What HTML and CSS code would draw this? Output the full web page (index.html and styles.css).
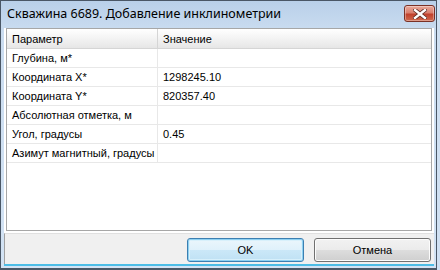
FILE: index.html
```html
<!DOCTYPE html>
<html lang="ru">
<head>
  <meta charset="UTF-8">
  <title>Добавление инклинометрии</title>
  <link rel="stylesheet" href="styles.css">
</head>
<body>
  <div class="window">
    <div class="titlebar">
      <span class="title">Скважина 6689. Добавление инклинометрии</span>
      <button class="close" title="Закрыть">
        <svg width="14" height="10" viewBox="0 0 14 10">
          <path d="M2 1 L12 9 M12 1 L2 9" stroke="#5a2a22" stroke-width="4" stroke-linecap="square"/>
          <path d="M2 1 L12 9 M12 1 L2 9" stroke="#fff" stroke-width="2.4" stroke-linecap="square"/>
        </svg>
      </button>
    </div>

    <div class="client">
      <div class="grid-wrap">
        <table class="grid">
          <thead>
            <tr><th class="col-name">Параметр</th><th>Значение</th></tr>
          </thead>
          <tbody>
            <tr><td>Глубина, м*</td><td></td></tr>
            <tr><td>Координата X*</td><td>1298245.10</td></tr>
            <tr><td>Координата Y*</td><td>820357.40</td></tr>
            <tr><td>Абсолютная отметка, м</td><td></td></tr>
            <tr><td>Угол, градусы</td><td>0.45</td></tr>
            <tr><td>Азимут магнитный, градусы</td><td></td></tr>
          </tbody>
        </table>
      </div>

      <div class="footer">
        <button class="btn default">OK</button>
        <button class="btn">Отмена</button>
      </div>
    </div>
  </div>
</body>
</html>
```

FILE: styles.css
```css
body { margin: 0; background: #cfe0f2; font-family: "Liberation Sans", Arial, sans-serif; }
.window { width: 437px; height: 270px; box-sizing: border-box; border: 1px solid #4a5766; border-bottom-width: 2px; display: flex; flex-direction: column; background: linear-gradient(#b9d0e9, #cadcf0 30px, #d3e3f4); }
.titlebar { height: 27px; display: flex; align-items: flex-start; position: relative; }
.title { font-family: "Noto Sans", sans-serif; font-size: 12.5px; color: #000; padding: 5px 0 0 6px; line-height: 16px; }
.close { position: absolute; right: 1px; top: 4px; width: 31px; height: 17px; padding: 0; border: 1px solid #7a3126; border-radius: 3px; background: linear-gradient(#e9a99b, #d9806f 45%, #c1412c 55%, #cf6a4f); display: flex; align-items: center; justify-content: center; box-shadow: inset 0 0 0 1px rgba(255,255,255,0.35); }
.client { flex: 1; margin: 0 2px 2px 3px; display: flex; flex-direction: column; background: #fff; border-bottom: 2px solid #4dbde6; }
.grid-wrap { flex: 1; padding: 0 2px 2px 2px; display: flex; }
.grid { flex: 1; border: 1px solid #a7a7a7; border-collapse: collapse; font-size: 11px; color: #000; display: block; }
.grid thead, .grid tbody { display: block; }
.grid tr { display: flex; }
.grid th, .grid td { text-align: left; font-weight: normal; padding: 0 5px; box-sizing: border-box; white-space: nowrap; }
.grid th { height: 20px; line-height: 20px; background: linear-gradient(#ffffff, #f3f3f3 50%, #e6e6e6); border-bottom: 1px solid #d5d5d5; }
.grid th:first-child { width: 151px; border-right: 1px solid #d5d5d5; }
.grid th:last-child { flex: 1; }
.grid td { height: 19px; line-height: 18px; border-bottom: 1px solid #e8e8e8; }
.grid td:first-child { width: 151px; border-right: 1px solid #e8e8e8; }
.grid td:last-child { flex: 1; }
.footer { height: 31px; background: #f0f0f0; border-top: 1px solid #e0e0e0; border-left: 1px solid #a0a0a0; display: flex; justify-content: flex-end; align-items: flex-start; gap: 10px; padding: 4px 3px 0 0; box-sizing: border-box; }
.btn { width: 117px; height: 24px; font-family: "Liberation Sans", Arial, sans-serif; font-size: 11px; color: #000; border: 1px solid #707070; border-radius: 3px; background: linear-gradient(#f2f2f2, #ebebeb 50%, #dddddd 51%, #cfcfcf); box-shadow: inset 0 0 0 1px #fcfcfc; cursor: pointer; }
.btn.default { border-color: #3c7fb1; background: linear-gradient(#ebf6fc, #dff1fb 50%, #cbe8f8 51%, #bfe1f4); box-shadow: inset 0 0 0 1px #8ed0f1, inset 0 0 0 2px #d8f0fb; }
```
